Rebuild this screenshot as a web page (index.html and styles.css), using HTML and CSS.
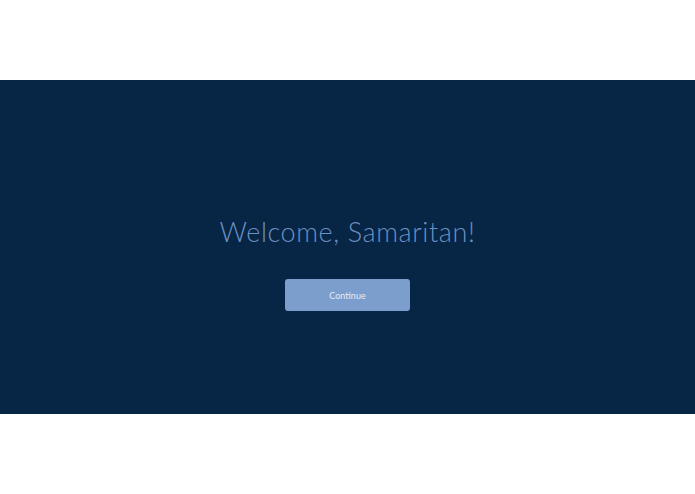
FILE: index.html
```html
<!DOCTYPE html>
<html>
<head>
<meta charset="utf-8">
<link rel="stylesheet" href="styles.css">
</head>
<body>
<div class="top"></div>
<main class="band">
  <h1 class="title">Welcome, Samaritan!</h1>
  <button class="btn">Continue</button>
</main>
</body>
</html>
```
FILE: styles.css
```css
html, body {
  margin: 0;
  padding: 0;
  background: #ffffff;
  font-family: Lato, "Liberation Sans", sans-serif;
}
.top {
  height: 80px;
}
.band {
  height: 334px;
  background: #072544;
  display: flex;
  flex-direction: column;
  align-items: center;
  box-sizing: border-box;
  padding-top: 134px;
}
.title {
  margin: 0;
  font-size: 27px;
  line-height: 36px;
  font-weight: 300;
  color: #6c90c1;
  letter-spacing: 0.6px;
}
.btn {
  margin-top: 29px;
  width: 125px;
  height: 32px;
  border: none;
  border-radius: 3px;
  background: #7b9ecc;
  color: #e4ecf6;
  font-family: Lato, "Liberation Sans", sans-serif;
  font-size: 9px;
  padding: 0;
}
```
